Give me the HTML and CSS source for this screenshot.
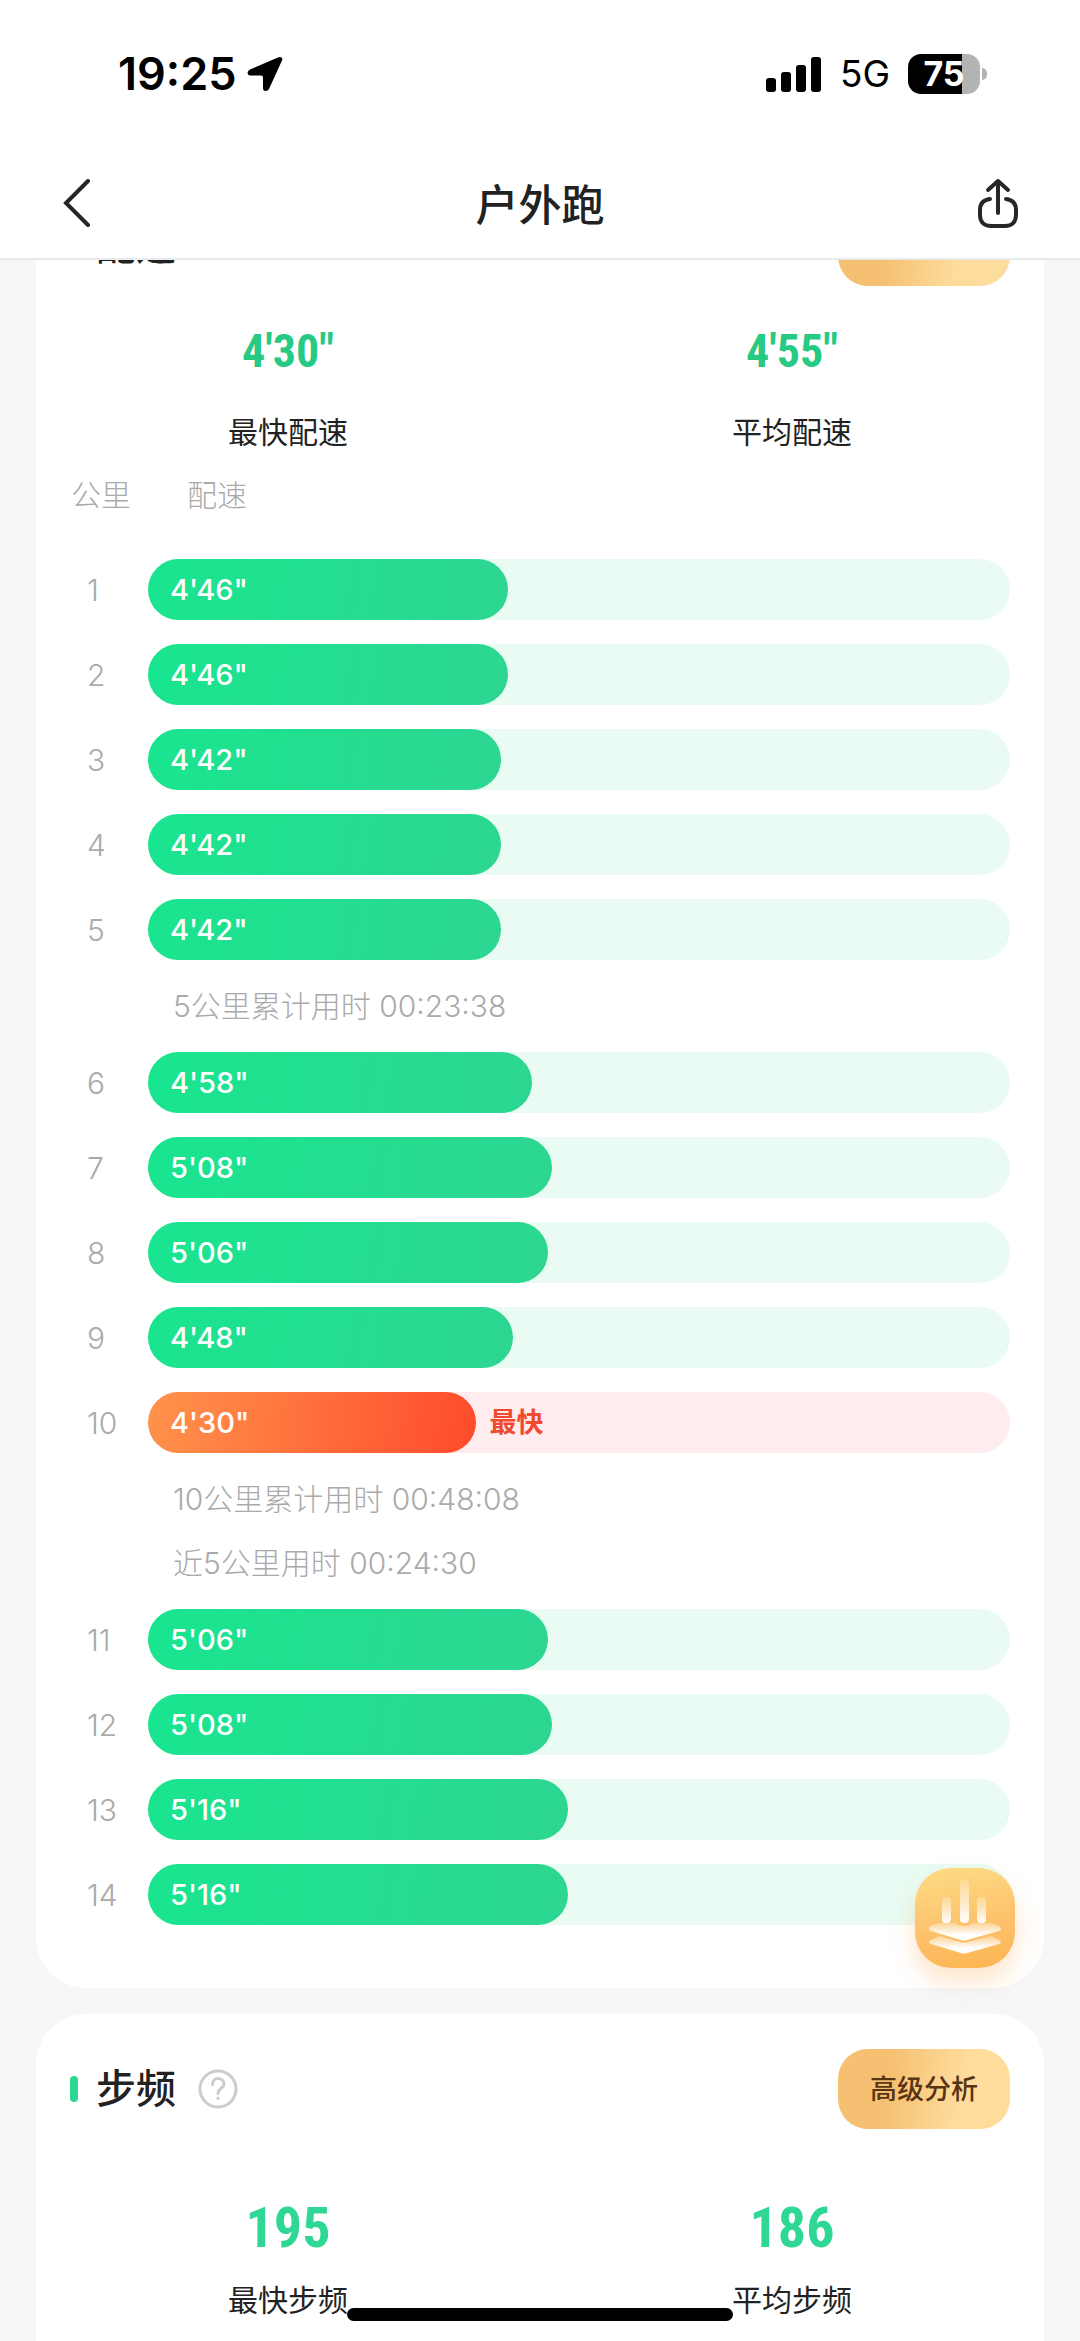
FILE: index.html
```html
<!DOCTYPE html>
<html lang="zh-CN">
<head>
    <meta charset="UTF-8">
    <meta name="viewport" content="width=device-width, initial-scale=1.0">
    <title>户外跑</title>
    <link rel="stylesheet" href="styles.css">
</head>
<body>
    <header class="topo">
        <div class="status">
            <div class="status_esq">
                <span class="hora">19:25</span>
                <svg width="36" height="36" viewBox="0 0 36 36"><path d="M31 1.500L3 13.500Q.500 15 .500 17T3 19.500H14Q16 19.500 16 21.500V32Q16 35 18.500 35T22 33L35 4.500Q36 2.500 34.500 1.500T31 1.500Z"/></svg>
            </div>
            <div class="status_dir">
                <svg width="56" height="36" viewBox="0 0 56 36">
                    <rect x="0" y="22" width="10" height="14" rx="3"/>
                    <rect x="15" y="16" width="10" height="20" rx="3"/>
                    <rect x="30" y="9" width="10" height="27" rx="3"/>
                    <rect x="45" y="1" width="10" height="35" rx="3"/>
                </svg>
                <span class="rede">5G</span>
                <div class="bateria"><span class="bateria_carga">75</span></div>
            </div>
        </div>
        <nav class="nav">
            <button class="nav_btn" aria-label="返回">
                <svg width="32" height="48" viewBox="0 0 32 48" fill="none" stroke="#262626" stroke-width="4" stroke-linecap="round"><path d="M27 2L5 24L27 46"/></svg>
            </button>
            <h1 class="nav_titulo">户外跑</h1>
            <button class="nav_btn" aria-label="分享">
                <svg width="42" height="50" viewBox="0 0 42 50" fill="none" stroke="#262626" stroke-width="4" stroke-linecap="round" stroke-linejoin="round">
                    <path d="M21 35V3M11 12L21 3L31 12"/>
                    <path d="M13 21C6 22 3 26 3 32V37C3 44 7 48 14 48H28C35 48 39 44 39 37V32C39 26 36 22 29 21"/>
                </svg>
            </button>
        </nav>
    </header>

    <main class="pagina">
        <section class="card card_ritmo">
            <div class="card_topo">
                <h2 class="card_titulo">配速</h2>
                <button class="btn_analise">高级分析</button>
            </div>
            <div class="resumo">
                <div class="item">
                    <p class="valor">4'30"</p>
                    <p class="rotulo">最快配速</p>
                </div>
                <div class="item">
                    <p class="valor">4'55"</p>
                    <p class="rotulo">平均配速</p>
                </div>
            </div>
            <div class="lista_topo">
                <span>公里</span>
                <span>配速</span>
            </div>
            <div class="lista">
                <div class="linha"><span class="km">1</span><div class="barra"><div class="cheio" style="width:41.8%">4'46"</div></div></div>
                <div class="linha"><span class="km">2</span><div class="barra"><div class="cheio" style="width:41.8%">4'46"</div></div></div>
                <div class="linha"><span class="km">3</span><div class="barra"><div class="cheio" style="width:40.9%">4'42"</div></div></div>
                <div class="linha"><span class="km">4</span><div class="barra"><div class="cheio" style="width:40.9%">4'42"</div></div></div>
                <div class="linha"><span class="km">5</span><div class="barra"><div class="cheio" style="width:40.9%">4'42"</div></div></div>
                <p class="nota">5公里累计用时 00:23:38</p>
                <div class="linha"><span class="km">6</span><div class="barra"><div class="cheio" style="width:44.5%">4'58"</div></div></div>
                <div class="linha"><span class="km">7</span><div class="barra"><div class="cheio" style="width:46.9%">5'08"</div></div></div>
                <div class="linha"><span class="km">8</span><div class="barra"><div class="cheio" style="width:46.4%">5'06"</div></div></div>
                <div class="linha"><span class="km">9</span><div class="barra"><div class="cheio" style="width:42.3%">4'48"</div></div></div>
                <div class="linha rapida"><span class="km">10</span><div class="barra"><div class="cheio" style="width:38.1%">4'30"</div><span class="selo">最快</span></div></div>
                <p class="nota">10公里累计用时 00:48:08</p>
                <p class="nota">近5公里用时 00:24:30</p>
                <div class="linha"><span class="km">11</span><div class="barra"><div class="cheio" style="width:46.4%">5'06"</div></div></div>
                <div class="linha"><span class="km">12</span><div class="barra"><div class="cheio" style="width:46.9%">5'08"</div></div></div>
                <div class="linha"><span class="km">13</span><div class="barra"><div class="cheio" style="width:48.7%">5'16"</div></div></div>
                <div class="linha"><span class="km">14</span><div class="barra"><div class="cheio" style="width:48.7%">5'16"</div></div></div>
            </div>
        </section>

        <section class="card card_cadencia">
            <div class="card_topo">
                <h2 class="card_titulo">步频</h2>
                <button class="btn_ajuda" aria-label="步频说明">
                    <svg width="40" height="40" viewBox="0 0 40 40" fill="none" stroke="#ccc" stroke-width="3" stroke-linecap="round">
                        <circle cx="20" cy="20" r="18"/>
                        <path d="M14.500 15.500C14.500 11.500 17 9.500 20 9.500S26 11.500 26 15C26 19 20 19.500 20 24.500"/>
                        <path d="M20 29V29.500"/>
                    </svg>
                </button>
                <button class="btn_analise">高级分析</button>
            </div>
            <div class="resumo">
                <div class="item">
                    <p class="valor">195</p>
                    <p class="rotulo">最快步频</p>
                </div>
                <div class="item">
                    <p class="valor">186</p>
                    <p class="rotulo">平均步频</p>
                </div>
            </div>
        </section>
    </main>

    <button class="flutuante" aria-label="图层分析">
        <svg width="100" height="100" viewBox="0 0 100 100">
            <defs>
                <linearGradient id="g_pino" x1="0" y1="0" x2="0" y2="1">
                    <stop offset="0" stop-color="#fff" stop-opacity=".2"/>
                    <stop offset="1" stop-color="#fff"/>
                </linearGradient>
                <linearGradient id="g_base" x1="0" y1="0" x2="0" y2="1">
                    <stop offset="0" stop-color="#fff" stop-opacity=".3"/>
                    <stop offset=".7" stop-color="#fff"/>
                </linearGradient>
            </defs>
            <rect x="27" y="29" width="9" height="26" rx="4" fill="url(#g_pino)"/>
            <rect x="45" y="12" width="9" height="43" rx="4" fill="url(#g_pino)"/>
            <rect x="62" y="29" width="9" height="26" rx="4" fill="url(#g_pino)"/>
            <path d="M24 55H41Q43 58 49 58T57 55H76L84 58Q88 61 84 63L52 72Q49 73 46 72L16 63Q12 60 16 58Z" fill="url(#g_base)"/>
            <path d="M24 68L45 74Q49 75 53 74L76 68L84 72Q88 74 84 76L52 85Q49 86 46 85L16 76Q12 74 16 72Z" fill="url(#g_base)"/>
        </svg>
    </button>
    <div class="home"></div>
</body>
</html>
```

FILE: styles.css
```css
*{
    padding: 0px;
    margin: 0px;
    border: none;
    box-sizing: border-box;
}
body{
    height: 100vh;
    overflow: hidden;
    background-color: #f5f7f9;
    color: #222;
    font-family: Inter, "Noto Sans CJK SC", sans-serif;
    font-size: 30px;
    line-height: 42px;
}
button{
    background: none;
    font-family: inherit;
    cursor: pointer;
}
svg{
    display: block;
}

/* topo fixo */
.topo{
    position: fixed;
    top: 0px;
    left: 0px;
    right: 0px;
    z-index: 2;
    background-color: #fff;
    border-bottom: 2px solid #e8eaeb;
}
.status{
    display: flex;
    justify-content: space-between;
    align-items: center;
    height: 148px;
    padding: 0px 100px 0px 118px;
    color: #000;
}
.status_esq, .status_dir{
    display: flex;
    align-items: center;
}
.status_esq{
    gap: 10px;
}
.status_dir{
    gap: 18px;
}
.hora{
    font-size: 45px;
    font-weight: 600;
}
.rede{
    font-size: 37px;
}
.bateria{
    position: relative;
    width: 72px;
    height: 40px;
    border-radius: 13px;
    background: linear-gradient(90deg, #000 75%, #b3b3b3 75%);
    text-align: center;
}
.bateria::after{
    content: "";
    position: absolute;
    left: 74px;
    top: 14px;
    width: 5px;
    height: 12px;
    border-radius: 0px 6px 6px 0px;
    background-color: #b3b3b3;
}
.bateria_carga{
    color: #fff;
    font-size: 34px;
    font-weight: 700;
    line-height: 40px;
}
.nav{
    display: flex;
    justify-content: space-between;
    align-items: center;
    height: 110px;
    padding: 0px 61px;
}
.nav_btn{
    display: flex;
    align-items: center;
    width: 42px;
    height: 50px;
}
.nav_titulo{
    padding-top: 4px;
    font-size: 43px;
    font-weight: 500;
}

/* cards */
.pagina{
    display: flex;
    flex-direction: column;
    gap: 26px;
    padding: 171px 36px 0px;
}
.card{
    padding: 35px 34px 63px;
    border-radius: 50px;
    background-color: #fff;
}
.card_topo{
    display: flex;
    align-items: center;
    height: 80px;
}
.card_titulo{
    display: flex;
    align-items: center;
    gap: 18px;
    font-size: 40px;
    font-weight: 500;
}
.card_titulo::before{
    content: "";
    width: 8px;
    height: 26px;
    border-radius: 4px;
    background-color: #2dd691;
}
.btn_ajuda{
    margin-left: 22px;
}
.btn_analise{
    height: 80px;
    margin-left: auto;
    padding: 0px 32px 4px;
    border-radius: 30px;
    background: linear-gradient(100deg, #f5c071 30%, #fedc9c 70%);
    color: #593413;
    font-size: 27px;
    font-weight: 500;
}
.resumo{
    display: grid;
    grid-template-columns: 1fr 1fr;
    margin: 0px -34px;
    text-align: center;
}
.valor{
    color: #26ca83;
    font-family: "Roboto Condensed", "Liberation Sans Narrow", sans-serif;
    font-weight: 700;
}
.card_ritmo .resumo{
    margin-top: 35px;
}
.card_ritmo .valor{
    margin-bottom: 30px;
    font-size: 46px;
    line-height: 60px;
}
.card_cadencia .resumo{
    margin-top: 63px;
}
.card_cadencia .valor{
    margin-bottom: 15px;
    color: #2fd795;
    font-size: 56px;
    line-height: 72px;
}

/* lista de km */
.lista_topo{
    display: flex;
    gap: 56px;
    margin: 21px 0px 43px;
    padding-left: 1px;
    color: #aaa;
    font-weight: 300;
}
.lista{
    display: flex;
    flex-direction: column;
    gap: 24px;
}
.linha{
    display: flex;
    align-items: center;
}
.km{
    width: 78px;
    padding-left: 17px;
    color: #aaa;
    font-weight: 300;
}
.barra{
    display: flex;
    align-items: center;
    flex: 1;
    height: 61px;
    border-radius: 31px;
    background-color: #e9fbf3;
}
.cheio{
    height: 61px;
    padding-left: 22px;
    border-radius: 31px;
    background: linear-gradient(100deg, #19e58f, #2dd691);
    color: #fff;
    font-size: 29px;
    font-weight: 500;
    line-height: 61px;
}
.rapida .barra{
    background-color: #feecee;
}
.rapida .cheio{
    background: linear-gradient(100deg, #ff934c, #ff4b2b);
}
.selo{
    margin-left: 13px;
    color: #f04a2f;
    font-size: 27px;
    font-weight: 700;
}
.nota{
    padding-left: 103px;
    color: #aaa;
    font-weight: 300;
    line-height: 44px;
}
.nota + .nota{
    margin-top: -4px;
}

.flutuante{
    position: fixed;
    right: 65px;
    bottom: 373px;
    z-index: 1;
    width: 100px;
    height: 100px;
    border-radius: 36px;
    background: linear-gradient(170deg, #fddc85, #fdc06a 60%, #fcb550);
    box-shadow: 0px 14px 24px rgba(253, 170, 80, 0.3);
}
.home{
    position: fixed;
    left: 50%;
    bottom: 20px;
    z-index: 3;
    width: 386px;
    height: 13px;
    margin-left: -193px;
    border-radius: 7px;
    background-color: #000;
}
```
